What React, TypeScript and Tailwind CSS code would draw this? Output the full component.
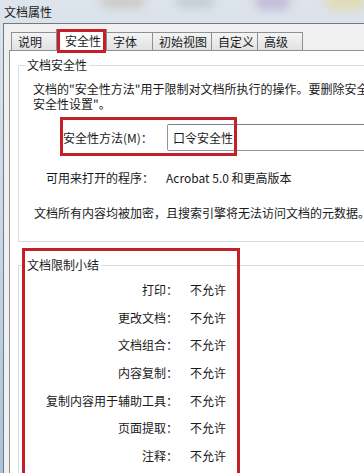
import React from 'react';

const tabs = [
  { label: '说明', w: 'w-[46px]' },
  { label: '安全性', w: 'w-[51px]', active: true },
  { label: '字体', w: 'w-[47px]' },
  { label: '初始视图', w: 'w-[60px]' },
  { label: '自定义', w: 'w-[47px]' },
  { label: '高级', w: 'w-[46px]' },
];

const limits = ['打印', '更改文档', '文档组合', '内容复制', '复制内容用于辅助工具', '页面提取', '注释'];

export default function App() {
  return (
    <div className="relative w-[364px] h-[473px] overflow-hidden bg-gradient-to-b from-[#dde4eb] via-[#c8d6e4] to-[#a9c1d9] font-['Noto_Sans_CJK_SC',sans-serif] text-[12px] text-[#1a1a1a]">
      {/* blurred glass behind the title */}
      <div className="absolute left-[100px] top-[-6px] w-[45px] h-[14px] rounded-full bg-[#b9b3a6] opacity-50 blur-[5px]" />
      <div className="absolute left-[175px] top-[-6px] w-[40px] h-[14px] rounded-full bg-[#aeb6c0] opacity-50 blur-[5px]" />
      <div className="absolute left-[255px] top-[-6px] w-[35px] h-[16px] rounded-full bg-[#a996c9] opacity-50 blur-[5px]" />
      <div className="absolute left-[325px] top-[-6px] w-[40px] h-[16px] rounded-full bg-[#e4d58f] opacity-60 blur-[5px]" />

      <div className="relative h-[23px] pl-[4px] flex items-center leading-none">文档属性</div>

      <div className="relative ml-[3px] h-[450px] border-l border-t border-[#6f7a86] bg-[#f0f0f0] pl-[5px]">
        {/* tabs */}
        <div className="flex items-end h-[26px] pl-[2px]">
          {tabs.map((t, i) =>
            t.active ? (
              <div
                key={t.label}
                className={`relative z-10 ${t.w} h-[22px] -mb-px -ml-px border-l border-t border-r border-[#8d9196] bg-white pl-[8px] flex items-center leading-none`}
              >
                {t.label}
                <div className="absolute -top-px -bottom-[2px] left-0 right-0 border-[3px] border-[#c4202a]" />
              </div>
            ) : (
              <div
                key={t.label}
                className={`${t.w} h-[18px] ${i > 0 ? '-ml-px' : ''} border-l border-t border-r border-[#8d9196] bg-gradient-to-b from-[#f4f4f4] to-[#e2e2e2] pl-[6px] flex items-center leading-none`}
              >
                {t.label}
              </div>
            )
          )}
        </div>

        {/* panel */}
        <div className="h-full w-[420px] border-l border-t border-[#8e9196] bg-white">
          {/* 文档安全性 */}
          <fieldset className="ml-[8px] mt-[6px] w-[420px] border border-[#d9dde2] pb-[20px]">
            <legend className="ml-[6px] px-[2px] leading-[16px]">文档安全性</legend>
            <div className="mt-[8px] pl-[14px] leading-[15px] whitespace-nowrap">
              <div>文档的"安全性方法"用于限制对文档所执行的操作。要删除安全性限制，请将"安全性方法"设置为"无</div>
              <div>安全性设置"。</div>
            </div>

            <div className="relative mt-[13px] ml-[44px] flex items-center h-[27px]">
              <span className="w-[104px] leading-none">安全性方法(M)：</span>
              <div className="flex-1 h-[27px] border border-[#8f969e] border-t-[#7a8088] rounded-[2px] bg-white pl-[5px] flex items-center leading-none">
                口令安全性
              </div>
              <div className="absolute left-[-3px] top-[-7px] w-[177px] h-[39px] border-[3px] border-[#c4202a]" />
            </div>

            <div className="mt-[19px] pl-[27px] flex leading-[16px] whitespace-nowrap">
              <span className="w-[120px]">可用来打开的程序：</span>
              <span>Acrobat 5.0 和更高版本</span>
            </div>

            <div className="mt-[19px] pl-[15px] leading-[16px] whitespace-nowrap">
              文档所有内容均被加密，且搜索引擎将无法访问文档的元数据。
            </div>
          </fieldset>

          {/* 文档限制小结 */}
          <div className="relative mt-[15px]">
            <fieldset className="ml-[8px] w-[420px] h-[260px] border border-[#d9dde2]">
              <legend className="ml-[6px] px-[2px] leading-[16px]">文档限制小结</legend>
              <div className="mt-[3px] flex flex-col">
                {limits.map((l) => (
                  <div key={l} className="h-[27.7px] flex items-center leading-none">
                    <span className="w-[159px] text-right">{l}：</span>
                    <span className="ml-[12px]">不允许</span>
                  </div>
                ))}
              </div>
            </fieldset>
            <div className="absolute left-[12px] top-[-9px] w-[218px] h-[260px] border-[3px] border-[#c4202a]" />
          </div>
        </div>
      </div>
    </div>
  );
}
